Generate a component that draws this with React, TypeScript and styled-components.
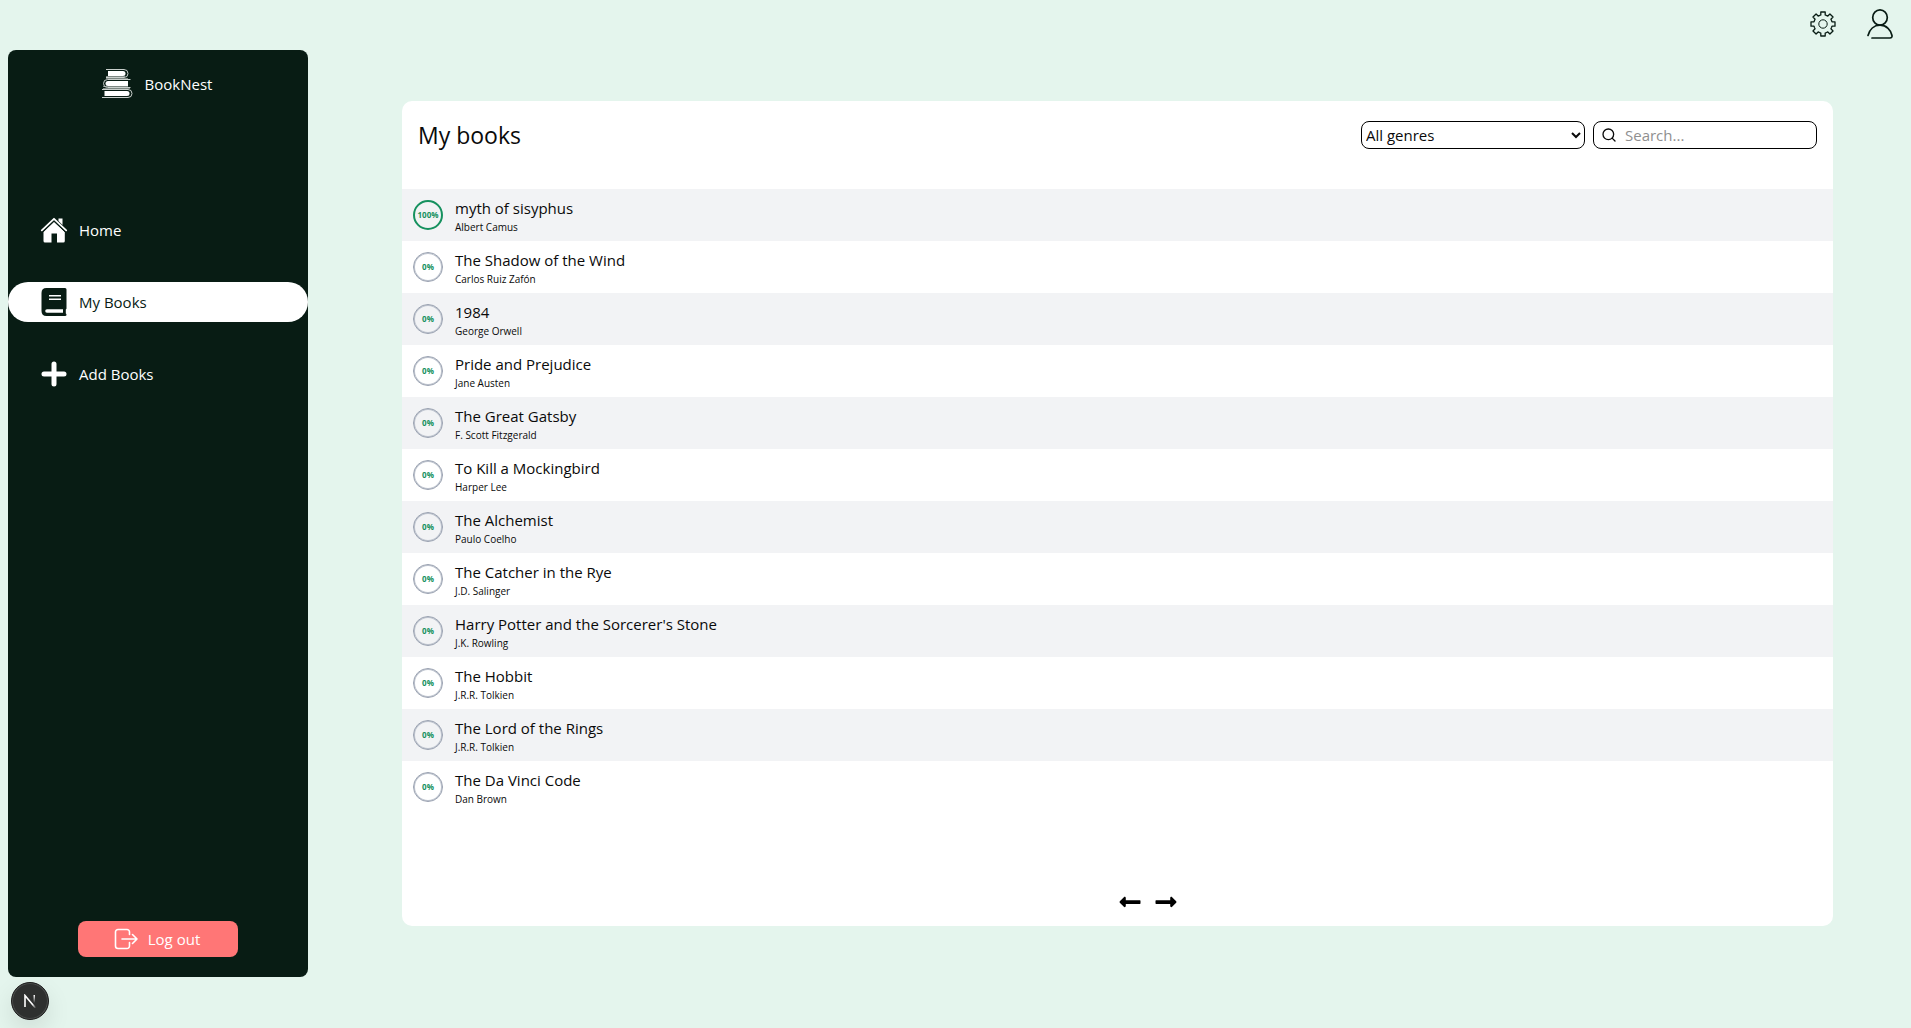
import React, { useState } from "react";
import styled, { createGlobalStyle } from "styled-components";
import { FaLongArrowAltLeft, FaLongArrowAltRight } from "react-icons/fa";
import { Search } from "lucide-react";

const GlobalStyle = createGlobalStyle`
  * { box-sizing: border-box; }
  body {
    margin: 0;
    background: #e4f5ed;
    color: #0a0a0a;
    font-family: "Segoe UI", "Open Sans", "Noto Sans", sans-serif;
    font-size: 15px;
    line-height: 24px;
  }
  button, input, select { font: inherit; color: inherit; }
`;

const Page = styled.div`
  display: flex;
  gap: 16px;
  min-height: 100vh;
  padding-left: 8px;
`;

const Sidebar = styled.aside`
  display: flex;
  flex: 0 0 300px;
  flex-direction: column;
  align-items: center;
  margin: 50px 0 51px;
  padding: 16px 0 20px;
  border-radius: 8px;
  background: #081c14;
  color: #fff;
`;

const Brand = styled.div`
  display: flex;
  align-items: center;
  gap: 12px;
  height: 36px;
  margin-bottom: 108px;
  padding-right: 3px;
  font-weight: 500;
`;

const Nav = styled.nav`
  display: flex;
  flex-direction: column;
  gap: 32px;
  width: 100%;
`;

const NavLink = styled.a<{ $active?: boolean }>`
  display: flex;
  align-items: center;
  gap: 11px;
  height: 40px;
  padding-left: 32px;
  border-radius: 20px;
  background: ${(p) => (p.$active ? "#fff" : "transparent")};
  color: ${(p) => (p.$active ? "#081c14" : "#fff")};
  font-weight: ${(p) => (p.$active ? 400 : 500)};
  text-decoration: none;
`;

const LogoutButton = styled.button`
  display: flex;
  align-items: center;
  justify-content: center;
  gap: 10px;
  width: 160px;
  height: 36px;
  margin-top: auto;
  padding: 0 2px 0 0;
  border: 0;
  border-radius: 8px;
  background: #ff7676;
  color: #fff;
  font-weight: 500;
  cursor: pointer;
`;

const Main = styled.main`
  display: flex;
  flex: 1;
  flex-direction: column;
  min-width: 0;
`;

const TopBar = styled.header`
  display: flex;
  align-items: center;
  justify-content: flex-end;
  gap: 28px;
  height: 48px;
  padding-right: 16px;
`;

const IconButton = styled.button`
  display: flex;
  align-items: center;
  justify-content: center;
  padding: 0;
  border: 0;
  background: none;
  color: #081c14;
  cursor: pointer;
`;

const Card = styled.section`
  display: flex;
  flex: 1;
  flex-direction: column;
  margin: 53px 78px 102px;
  border-radius: 10px;
  background: #fff;
`;

const CardHeader = styled.div`
  display: flex;
  align-items: center;
  justify-content: space-between;
  height: 68px;
  margin-bottom: 20px;
  padding: 0 16px;
`;

const Title = styled.h1`
  margin: 0;
  font-size: 23px;
  font-weight: 400;
  line-height: 32px;
`;

const Filters = styled.div`
  display: flex;
  gap: 8px;
`;

const GenreSelect = styled.select`
  width: 224px;
  height: 28px;
  padding: 0;
  border: 1px solid #000;
  border-radius: 8px;
  background: #fff;
`;

const SearchBox = styled.label`
  display: flex;
  align-items: center;
  gap: 8px;
  width: 224px;
  height: 28px;
  padding: 0 7px;
  border: 1px solid #000;
  border-radius: 8px;
`;

const SearchInput = styled.input`
  flex: 1;
  min-width: 0;
  padding: 0;
  border: 0;
  outline: 0;
  background: none;
  &::placeholder { color: #8f8f8f; opacity: 1; }
`;

const BookList = styled.ul`
  margin: 0;
  padding: 0;
  list-style: none;
`;

const BookRow = styled.li`
  display: flex;
  align-items: center;
  gap: 12px;
  height: 52px;
  padding: 0 11px;
  &:nth-child(odd) { background: #f2f3f5; }
`;

const Progress = styled.div<{ $done: boolean }>`
  display: grid;
  place-items: center;
  width: 30px;
  height: 30px;
  border: ${(p) => (p.$done ? "2px solid #16915f" : "1px solid #99a1b0")};
  border-radius: 50%;
  box-shadow: ${(p) => (p.$done ? "none" : "inset 0 0 0 1px #bcc2cd")};
  color: #16915f;
  font-size: 8px;
  font-weight: 700;
  line-height: 12px;
`;

const BookText = styled.div`
  display: flex;
  flex-direction: column;
`;

const BookTitle = styled.span`
  line-height: 24px;
`;

const Author = styled.span`
  font-size: 10px;
  line-height: 14px;
`;

const Pager = styled.div`
  display: flex;
  justify-content: center;
  gap: 12px;
  margin-top: auto;
  padding: 0 0 12px 60px;
`;

const DevBadge = styled.button`
  position: fixed;
  bottom: 8px;
  left: 11px;
  display: grid;
  place-items: center;
  width: 38px;
  height: 38px;
  padding: 0;
  border: 1px solid #1c1c1c;
  border-radius: 50%;
  background: #2e302f;
  box-shadow: inset 0 0 0 1px #4c4e4d, 0 10px 24px rgba(0, 0, 0, 0.1);
  cursor: pointer;
`;

const BooksLogo = () => (
  <svg width="32" height="32" viewBox="0 0 32 32" fill="none" stroke="#c9cfcc" aria-hidden="true">
    <path d="M5 1.500h18a4 4 0 0 1 0 8H5" />
    <path d="M7 3h15a2 2 0 0 1 0 5H7z" fill="#fff" stroke="none" />
    <path d="M29.500 11.500H6.500a4 4 0 0 0 0 8h23" />
    <path d="M27 13h-20a2 2 0 0 0 0 5h20z" fill="#fff" stroke="none" />
    <path d="M1 21.500h26a4 4 0 0 1 0 8H1" />
    <path d="M3.500 23H26a2 2 0 0 1 0 5H3.500z" fill="#fff" stroke="none" />
    <path d="M5 8.500h19M5 10.500h22M2 18.500h25M2 20.500h27" opacity=".6" />
  </svg>
);

const HomeIcon = () => (
  <svg width="28" height="28" viewBox="0 0 28 28" fill="currentColor" aria-hidden="true">
    <path d="M18.500 2.500h4V9l-4-4z" />
    <path d="M14 5.800 24.800 16v9q0 1.500-1.500 1.500H17v-9h-5.500v9H5Q3.500 26.500 3.500 25v-9z" />
    <path d="M3 15.800 14 5.300l11 10.500" fill="none" stroke="#081c14" strokeWidth="1" />
    <path d="M1.800 14.300 14 2.800l12.200 11.500" fill="none" stroke="currentColor" strokeWidth="1.800" strokeLinecap="round" strokeLinejoin="round" />
  </svg>
);

const BookIcon = () => (
  <svg width="28" height="28" viewBox="0 0 28 28" fill="currentColor" aria-hidden="true">
    <path fillRule="evenodd" d="M6.500 0H25q1.500 0 1.500 1.500v19q0 .6-.7 1v4q.7.500.7 1.200 0 1.300-1.500 1.300H6.500Q1.500 28 1.500 23V5Q1.500 0 6.500 0ZM9 7v1.500h12V7ZM9 10.500V12h12v-1.500ZM7 21.200a1.800 1.800 0 0 0 0 3.600h16v-3.600Z" />
  </svg>
);

const PlusIcon = () => (
  <svg width="28" height="28" viewBox="0 0 28 28" stroke="currentColor" strokeWidth="5" strokeLinecap="round" aria-hidden="true">
    <path d="M14 4v20M4 14h20" />
  </svg>
);

const LogoutIcon = () => (
  <svg width="24" height="22" viewBox="0 0 24 22" fill="none" stroke="currentColor" strokeWidth="1.600" strokeLinecap="round" strokeLinejoin="round" aria-hidden="true">
    <path d="M15.500 6.500V4a2.500 2.500 0 0 0-2.500-2.500H4A2.500 2.500 0 0 0 1.500 4v14A2.500 2.500 0 0 0 4 20.500h9a2.500 2.500 0 0 0 2.500-2.500v-3.500" />
    <path d="M8 11h15M18.500 6.500 23 11l-4.500 4.500" />
  </svg>
);

const gearPath = (() => {
  const points: string[] = [];
  for (let i = 0; i < 8; i += 1) {
    const a = (i * Math.PI) / 4;
    [[-3.3, -8.6], [-2.2, -9], [-2.2, -12], [2.2, -12], [2.2, -9], [3.3, -8.6]].forEach(([x, y]) => {
      const px = x * Math.cos(a) - y * Math.sin(a);
      const py = x * Math.sin(a) + y * Math.cos(a);
      points.push(`${px.toFixed(2)} ${py.toFixed(2)}`);
    });
  }
  return `M${points.join("L")}Z`;
})();

const GearIcon = () => (
  <svg width="28" height="28" viewBox="-14 -14 28 28" fill="none" stroke="currentColor" strokeWidth="1.300" strokeLinejoin="round" aria-hidden="true">
    <path d={gearPath} />
    <circle r="4.200" strokeWidth="1" />
  </svg>
);

const UserIcon = () => (
  <svg width="30" height="32" viewBox="0 0 30 32" fill="none" stroke="currentColor" strokeWidth="1.700" strokeLinecap="round" aria-hidden="true">
    <ellipse cx="15" cy="9.500" rx="7.300" ry="7.700" />
    <path d="M3 27.500C4.500 21.500 9 17.200 15 17.200c6.500 0 11 4.800 12 10.300.3 1.500-.5 2.500-2 2.500H7" />
  </svg>
);

const NextMark = () => (
  <svg width="14" height="14" viewBox="0 0 14 14" fill="none" strokeWidth="1.600" aria-hidden="true">
    <defs>
      <linearGradient id="stem" x1="0" y1="0" x2="0" y2="1">
        <stop offset="0" stopColor="#fff" />
        <stop offset="1" stopColor="#fff" stopOpacity="0" />
      </linearGradient>
      <linearGradient id="diagonal" x1="0" y1="0" x2="1" y2="1">
        <stop offset=".7" stopColor="#fff" />
        <stop offset="1" stopColor="#fff" stopOpacity=".1" />
      </linearGradient>
    </defs>
    <path d="M2 13V1.500L12.500 14" stroke="url(#diagonal)" />
    <rect x="10.500" y="1" width="1.500" height="8" fill="url(#stem)" />
  </svg>
);

const books = [
  { title: "myth of sisyphus", author: "Albert Camus", progress: 100 },
  { title: "The Shadow of the Wind", author: "Carlos Ruiz Zafón", progress: 0 },
  { title: "1984", author: "George Orwell", progress: 0 },
  { title: "Pride and Prejudice", author: "Jane Austen", progress: 0 },
  { title: "The Great Gatsby", author: "F. Scott Fitzgerald", progress: 0 },
  { title: "To Kill a Mockingbird", author: "Harper Lee", progress: 0 },
  { title: "The Alchemist", author: "Paulo Coelho", progress: 0 },
  { title: "The Catcher in the Rye", author: "J.D. Salinger", progress: 0 },
  { title: "Harry Potter and the Sorcerer's Stone", author: "J.K. Rowling", progress: 0 },
  { title: "The Hobbit", author: "J.R.R. Tolkien", progress: 0 },
  { title: "The Lord of the Rings", author: "J.R.R. Tolkien", progress: 0 },
  { title: "The Da Vinci Code", author: "Dan Brown", progress: 0 },
];

export default function App() {
  const [query, setQuery] = useState("");
  const visible = books.filter((b) => b.title.toLowerCase().includes(query.toLowerCase()));

  return (
    <>
      <GlobalStyle />
      <Page>
        <Sidebar>
          <Brand>
            <BooksLogo />
            BookNest
          </Brand>
          <Nav>
            <NavLink href="#home">
              <HomeIcon />
              Home
            </NavLink>
            <NavLink href="#books" $active aria-current="page">
              <BookIcon />
              My Books
            </NavLink>
            <NavLink href="#add">
              <PlusIcon />
              Add Books
            </NavLink>
          </Nav>
          <LogoutButton type="button">
            <LogoutIcon />
            Log out
          </LogoutButton>
        </Sidebar>
        <Main>
          <TopBar>
            <IconButton type="button" aria-label="Settings"><GearIcon /></IconButton>
            <IconButton type="button" aria-label="Profile"><UserIcon /></IconButton>
          </TopBar>
          <Card>
            <CardHeader>
              <Title>My books</Title>
              <Filters>
                <GenreSelect aria-label="Genre">
                  <option>All genres</option>
                </GenreSelect>
                <SearchBox>
                  <Search size={16} aria-hidden="true" />
                  <SearchInput
                    aria-label="Search books"
                    placeholder="Search..."
                    value={query}
                    onChange={(e) => setQuery(e.target.value)}
                  />
                </SearchBox>
              </Filters>
            </CardHeader>
            <BookList>
              {visible.map((book) => (
                <BookRow key={book.title}>
                  <Progress $done={book.progress === 100}>{book.progress}%</Progress>
                  <BookText>
                    <BookTitle>{book.title}</BookTitle>
                    <Author>{book.author}</Author>
                  </BookText>
                </BookRow>
              ))}
            </BookList>
            <Pager>
              <IconButton type="button" aria-label="Previous page"><FaLongArrowAltLeft size={24} color="#000" /></IconButton>
              <IconButton type="button" aria-label="Next page"><FaLongArrowAltRight size={24} color="#000" /></IconButton>
            </Pager>
          </Card>
        </Main>
      </Page>
      <DevBadge type="button" aria-label="Open developer tools"><NextMark /></DevBadge>
    </>
  );
}
